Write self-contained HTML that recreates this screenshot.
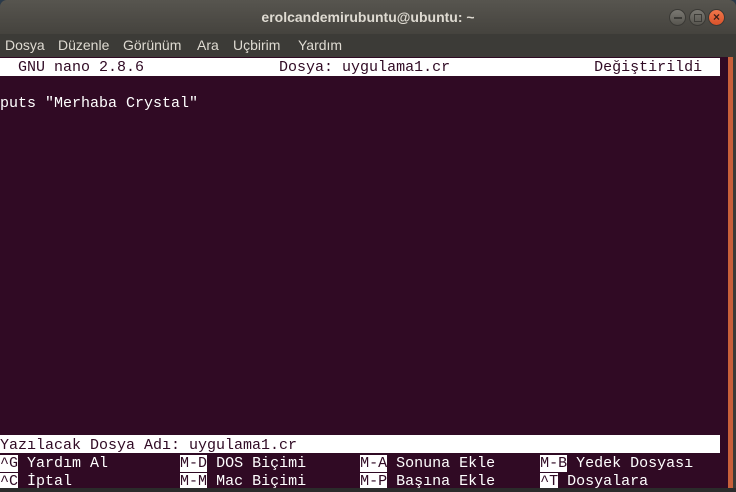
<!DOCTYPE html>
<html><head><meta charset="utf-8"><style>
*{margin:0;padding:0;box-sizing:border-box}
body{width:736px;height:492px;overflow:hidden;background:#2a3a4a;position:relative;font-family:"Liberation Sans","DejaVu Sans",sans-serif}
#win{position:absolute;left:0;top:0;width:736px;height:492px;border-radius:7px 7px 0 0;overflow:hidden;background:#3c3b37}
#title{height:34px;background:linear-gradient(#57554f,#45433e);color:#dfdbd2;font-weight:bold;font-size:14px;text-align:center;line-height:34px}
.btn{position:absolute;top:9px;width:17px;height:17px;border-radius:50%;background:linear-gradient(#7a7872,#57554f);border:1px solid #3a3935}
#menu{position:relative;height:23px;background:#3c3b37;color:#dfdbd2;font-size:14px;line-height:22px}
#menu span{position:absolute;top:0}
#term{position:absolute;left:0;top:57px;width:728px;height:431px;background:#300a24;font-family:"Liberation Mono","DejaVu Sans Mono",monospace;font-size:15px;color:#fff}
.row{position:absolute;left:0;height:18px;line-height:18px;white-space:pre}
.inv{background:#fff;color:#300a24}
#sb{position:absolute;left:728px;top:57px;width:5px;height:431px;background:#c8603a}
#bot{position:absolute;left:0;top:488px;width:736px;height:4px;background:#2b2b2b}
</style></head><body>
<div id="win">
<div id="title">erolcandemirubuntu@ubuntu: ~</div>
<div class="btn" style="left:669px"><div style="position:absolute;left:4px;top:7px;width:8px;height:1.5px;background:#3c3b37"></div></div>
<div class="btn" style="left:689px"><div style="position:absolute;left:4px;top:4px;width:8px;height:8px;border:1.5px solid #3c3b37"></div></div>
<div class="btn" style="left:708px;background:linear-gradient(#f0764a,#d9522a);color:#3c2018;font-size:12px;line-height:15px;text-align:center;font-weight:bold">×</div>
<div id="menu"><span style="left:5px">Dosya</span><span style="left:58px">Düzenle</span><span style="left:123px">Görünüm</span><span style="left:197px">Ara</span><span style="left:233px">Uçbirim</span><span style="left:298px">Yardım</span></div>
<div id="term">
<div class="row inv" style="top:1px;width:720px;line-height:20px">  GNU nano 2.8.6               Dosya: uygulama1.cr                Değiştirildi</div>
<div class="row" style="top:38px">puts "Merhaba Crystal"</div>
<div class="row inv" style="top:378px;width:720px;line-height:22px">Yazılacak Dosya Adı: uygulama1.cr </div>
<div class="row" style="top:398px"><span class="inv">^G</span> Yardım Al        <span class="inv">M-D</span> DOS Biçimi      <span class="inv">M-A</span> Sonuna Ekle     <span class="inv">M-B</span> Yedek Dosyası</div>
<div class="row" style="top:416px"><span class="inv">^C</span> İptal            <span class="inv">M-M</span> Mac Biçimi      <span class="inv">M-P</span> Başına Ekle     <span class="inv">^T</span> Dosyalara</div>
</div>
<div id="sb"></div>
<div id="bot"></div>
</div>
</body></html>
